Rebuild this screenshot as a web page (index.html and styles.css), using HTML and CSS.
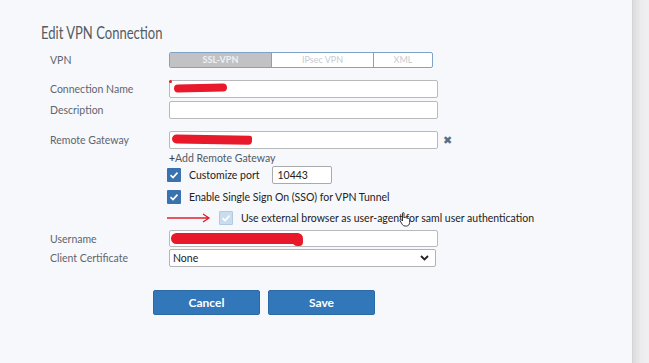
FILE: index.html
```html
<!DOCTYPE html>
<html>
<head>
<meta charset="utf-8">
<link rel="stylesheet" href="styles.css">
</head>
<body>
<div class="page">
  <div class="panel">
    <h1 class="title">Edit VPN Connection</h1>
    <div class="row r-vpn">
      <div class="label">VPN</div>
      <div class="seg">
        <div class="seg-item seg-on s1">SSL-VPN</div>
        <div class="seg-item s2">IPsec VPN</div>
        <div class="seg-item s3">XML</div>
      </div>
    </div>
    <div class="row r-name">
      <div class="label">Connection Name</div>
      <div class="input"><span class="scribble sc-name"></span><span class="dot"></span></div>
    </div>
    <div class="row r-desc">
      <div class="label">Description</div>
      <div class="input"></div>
    </div>
    <div class="row r-gw">
      <div class="label">Remote Gateway</div>
      <div class="input"><span class="scribble sc-gw"></span></div>
      <span class="remove">&#x2716;</span>
    </div>
    <div class="row r-add">
      <div class="label"></div>
      <div class="add"><b>+</b>Add Remote Gateway</div>
    </div>
    <div class="row r-port">
      <div class="label"></div>
      <span class="cb"><svg viewBox="0 0 14 14" width="14" height="14"><path d="M3.5 7.2 L6 9.6 L10.5 4.6" fill="none" stroke="#fff" stroke-width="1.6"/></svg></span>
      <span class="cbtext">Customize port</span>
      <div class="port">10443</div>
    </div>
    <div class="row r-sso">
      <div class="label"></div>
      <span class="cb"><svg viewBox="0 0 14 14" width="14" height="14"><path d="M3.5 7.2 L6 9.6 L10.5 4.6" fill="none" stroke="#fff" stroke-width="1.6"/></svg></span>
      <span class="cbtext">Enable Single Sign On (SSO) for VPN Tunnel</span>
    </div>
    <div class="row r-ext">
      <div class="label"></div>
      <svg class="arrow" width="44" height="10" viewBox="0 0 44 10"><path d="M0 5 H42 M36 1 L42 5 L36 9" fill="none" stroke="#e0202c" stroke-width="1.3"/></svg>
      <span class="cb cb-dis"><svg viewBox="0 0 14 14" width="14" height="14"><path d="M3.5 7.2 L6 9.6 L10.5 4.6" fill="none" stroke="#fff" stroke-width="1.6"/></svg></span>
      <span class="cbtext">Use external browser as user-agent for saml user authentication</span>
    </div>
    <div class="row r-user">
      <div class="label">Username</div>
      <div class="input"><span class="scribble sc-user"></span><span class="scribble sc-user2"></span></div>
    </div>
    <div class="row r-cert">
      <div class="label">Client Certificate</div>
      <div class="select"><span>None</span>
        <svg width="9" height="6" viewBox="0 0 9 6"><path d="M1 1 L4.5 4.5 L8 1" fill="none" stroke="#222" stroke-width="1.8"/></svg>
      </div>
    </div>
    <div class="buttons">
      <button class="btn">Cancel</button>
      <button class="btn">Save</button>
    </div>
    <svg class="cursor" width="12" height="15" viewBox="0 0 12 15"><path d="M3.5 1.2 C3.5 0.4 5 0.4 5 1.2 V6 L5.6 5.4 C6.4 5 7.2 5.6 7.2 6 C8 5.6 8.8 6 8.8 6.6 C9.6 6.2 10.6 6.8 10.6 7.6 V10.5 C10.6 12.6 9.4 14 7.6 14 H6 C4.6 14 3.8 13.2 3 12 L1 8.6 C0.6 7.8 1.6 7 2.4 7.8 L3.5 9 Z" fill="#fff" stroke="#222" stroke-width="0.9"/></svg>
  </div>
  <div class="edge"></div>
</div>
</body>
</html>
```
FILE: styles.css
```css
* { box-sizing: border-box; }
html, body { margin: 0; padding: 0; }
body {
  width: 649px; height: 363px; overflow: hidden;
  font-family: Lato, "Open Sans", sans-serif;
  background: #f7f8fb;
}
.page { display: flex; height: 363px; }
.panel {
  width: 632px; height: 363px;
  background: #f7f8fb;
  padding: 22px 0 0 50px;
  position: relative;
}
.edge {
  width: 17px; height: 363px;
  border-left: 1px solid #d4d4d6;
  background: linear-gradient(to right, #dcdcde, #ececee 50%, #f0f0f2);
}
.title {
  margin: 0 0 0 -9px;
  font-size: 16.5px; font-weight: 400; color: #555b62;
  line-height: 22px; height: 22px;
  transform: scaleX(0.79); transform-origin: left center;
  white-space: nowrap;
}
.row { display: flex; align-items: center; }
.label {
  width: 119px; flex: none;
  font-size: 10.5px; color: #5d6670;
}
.r-vpn { margin-top: 8px; height: 16px; }
.seg {
  display: flex; height: 16px; width: 264px;
  border: 1px solid #7fa3c6; border-radius: 2px;
  background: #fff;
  overflow: hidden;
}
.seg-item {
  font-size: 9px; color: #c9cbcf; text-align: center; line-height: 14px;
}
.s1 { width: 101px; background: #c2c2c4; color: #eef0f2; font-weight: 700; }
.s2 { width: 102px; border-left: 1px solid #7fa3c6; }
.s3 { flex: 1; border-left: 1px solid #7fa3c6; }
.input {
  width: 269px; height: 18px;
  background: #fff; border: 1px solid #b9b9bb; border-radius: 2px;
  position: relative;
}
.r-name { margin-top: 12px; }
.r-desc { margin-top: 3px; }
.r-gw { margin-top: 12px; }
.scribble {
  position: absolute; background: #e8192b; border-radius: 5px;
}
.sc-name { left: 4px; top: 3px; width: 53px; height: 8px; transform: rotate(-1deg); }
.dot { position: absolute; left: -1px; top: -1px; width: 3px; height: 3px; background: #e8192b; border-radius: 50%; }
.sc-gw { left: 2px; top: 3px; width: 80px; height: 9px; border-radius: 6px 3px 5px 6px; transform: rotate(1deg); }
.sc-user { left: 1px; top: 2px; width: 128px; height: 11px; border-radius: 7px 3px 3px 7px; }
.sc-user2 { left: 122px; top: 2px; width: 11px; height: 13px; border-radius: 6px 6px 4px 6px; }
.remove { margin-left: 5px; font-size: 11px; color: #5a6f80; }
.r-add { margin-top: 2px; height: 13px; }
.add { font-size: 10.5px; color: #4f5a64; }
.add b { color: #3e4750; }
.cb {
  width: 14px; height: 14px; flex: none;
  background: #3a72b0; border-radius: 1px;
  margin-left: -2px;
  display: flex;
}
.cb-dis { background: #c9ddef; border: 1px solid #b3c9de; margin-left: 8px; }
.cb-dis svg { margin: -1px; }
.cbtext { font-size: 10.5px; color: #222; margin-left: 8px; white-space: nowrap; }
.r-port { margin-top: 2px; height: 18px; }
.port {
  margin-left: 13px; width: 60px; height: 18px;
  background: #fff; border: 1px solid #aaa; border-radius: 2px;
  font-size: 10.5px; color: #222; padding: 1px 0 0 4px; line-height: 14px;
}
.r-sso { margin-top: 4px; height: 18px; }
.r-ext { margin-top: 4px; height: 16px; }
.arrow { margin-left: -2px; flex: none; }
.r-ext .cbtext { margin-left: 8px; }
.r-user { margin-top: 4px; }
.r-user .input { height: 17px; }
.r-cert { margin-top: 2px; }
.select {
  width: 267px; height: 18px;
  background: #fff; border: 1px solid #b3b3b5; border-radius: 2px;
  display: flex; align-items: center; justify-content: space-between;
  padding: 0 6px 0 3px;
  font-size: 10.5px; color: #222;
}
.buttons { display: flex; gap: 8px; margin: 23px 0 0 103px; }
.btn {
  width: 107px; height: 25px;
  background: #3277b9; color: #fff;
  border: 1px solid #2c6aa6; border-radius: 2px;
  font-family: Lato, sans-serif; font-size: 12px; font-weight: 700;
  padding: 0;
}
.cursor { position: absolute; left: 399px; top: 212px; }
```
